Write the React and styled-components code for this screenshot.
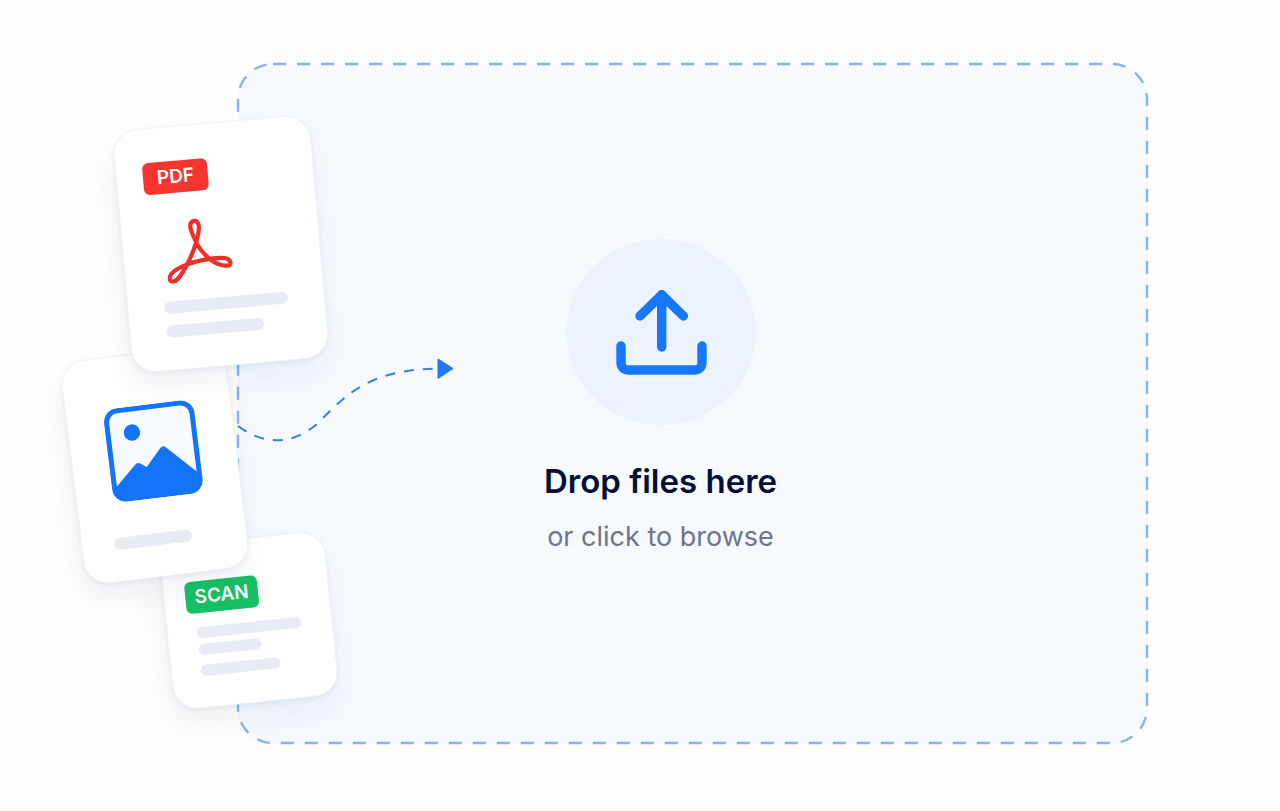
import React, { useRef } from 'react';
import styled, { createGlobalStyle } from 'styled-components';

const GlobalStyle = createGlobalStyle`
  * {
    box-sizing: border-box;
  }

  body {
    margin: 0;
    background: #fefefe;
    font-family: Inter, 'Liberation Sans', sans-serif;
  }
`

const Page = styled.main`
  position: relative;
  display: flex;
  min-height: 100vh;
  padding: 63px 132px 67px 237px;
  overflow: hidden;
`

const DropZone = styled.button`
  position: relative;
  flex: 1;
  display: flex;
  flex-direction: column;
  align-items: center;
  justify-content: center;
  padding: 0 64px 16px 0;
  border: none;
  border-radius: 36px;
  background: #f6faff;
  font-family: inherit;
  cursor: pointer;
`

const DashedOutline = styled.svg`
  position: absolute;
  inset: 0;
  width: 100%;
  height: 100%;
  overflow: visible;

  rect {
    width: calc(100% - 2px);
    height: calc(100% - 2px);
    fill: none;
    stroke: #8ab2f3;
    stroke-width: 2.4;
    stroke-dasharray: 13 11;
  }
`

const IconCircle = styled.span`
  display: flex;
  align-items: center;
  justify-content: center;
  width: 190px;
  height: 186px;
  border-radius: 50%;
  background: #edf3fe;
`

const Title = styled.span`
  margin-top: 36px;
  font-size: 33px;
  line-height: 40px;
  font-weight: 600;
  color: #050f3a;
`

const Hint = styled.span`
  margin-top: 20px;
  font-size: 27px;
  line-height: 32px;
  color: #6b7590;
`

const HiddenInput = styled.input`
  display: none;
`

const Connector = styled.svg`
  position: absolute;
  left: 230px;
  top: 350px;
`

const FileCard = styled.div`
  position: absolute;
  left: ${(props) => props.$left}px;
  top: ${(props) => props.$top}px;
  width: ${(props) => props.$width}px;
  height: ${(props) => props.$height}px;
  padding: ${(props) => props.$padding};
  display: flex;
  flex-direction: column;
  align-items: flex-start;
  border: 1px solid #f1f2fa;
  border-radius: 25px;
  background: #ffffff;
  box-shadow: -5px 16px 28px rgba(40, 50, 90, 0.06), 0 2px 4px rgba(60, 80, 150, 0.08);
  transform: rotate(${(props) => props.$tilt}deg);

  > * {
    flex-shrink: 0;
  }
`

const Badge = styled.span`
  width: ${(props) => props.$width}px;
  height: 32px;
  border-radius: 6px;
  background: ${(props) => props.$color};
  color: #ffffff;
  font-size: 19px;
  line-height: 32px;
  font-weight: 600;
  text-align: center;
`

const Lines = styled.div`
  display: flex;
  flex-direction: column;
  gap: ${(props) => props.$gap}px;
  margin: ${(props) => props.$margin};
`

const Line = styled.span`
  width: ${(props) => props.$width}px;
  height: ${(props) => (props.$thin ? 11 : 12)}px;
  border-radius: 6px;
  background: #e9ebf2;
`

const PictureMark = styled.svg`
  margin-left: 4px;
`

const AcrobatMark = styled.svg`
  margin: 27px 0 0 18px;
  transform: rotate(5deg);
`

function UploadIcon() {
  return (
    <svg width="92" height="86" viewBox="-1 0 92 86" fill="none" stroke="#1677ff" strokeWidth="9.4" strokeLinecap="round" strokeLinejoin="round">
      <path d="M5 57V73Q5 81 13 81H78Q86 81 86 73V57" />
      <path d="M45.7 6V58" />
      <path d="M24 27L45.7 5.8L67.4 27" />
    </svg>
  );
}

function PictureIcon() {
  return (
    <PictureMark width="92" height="94" viewBox="0 0 92 94">
      <rect x="3" y="2.5" width="86" height="89" rx="11.5" fill="#f6faff" stroke="#1473fb" strokeWidth="5" />
      <circle cx="27" cy="26" r="8.2" fill="#1473fb" />
      <path d="M2 81L26 58.500Q29 55.500 32 58L37.500 62L53.500 44.500Q56 42 58.500 44.500L90 76V81Q90 93 78 93H14Q2 93 2 81Z" fill="#1473fb" />
    </PictureMark>
  );
}

export default function App() {
  const fileInput = useRef(null);

  function handleBrowse() {
    fileInput.current.click();
  }

  return (
    <Page>
      <GlobalStyle />
      <DropZone type="button" onClick={handleBrowse}>
        <DashedOutline aria-hidden="true">
          <rect x="1" y="1" rx="35" />
        </DashedOutline>
        <IconCircle>
          <UploadIcon />
        </IconCircle>
        <Title>Drop files here</Title>
        <Hint>or click to browse</Hint>
      </DropZone>
      <HiddenInput ref={fileInput} type="file" multiple aria-label="Files" />

      <Connector width="230" height="100" viewBox="230 350 230 100" fill="none" aria-hidden="true">
        <path d="M238 426C262 444 291 447 318 423C345 396 368 369 440 368.5" stroke="#2f80ee" strokeWidth="2" strokeDasharray="10 9" />
        <path d="M438 359L453 368.5L438 378.5Z" fill="#1f7bf5" stroke="#1f7bf5" strokeLinejoin="round" />
      </Connector>

      <FileCard $left={166} $top={538} $width={166} $height={165} $tilt={-6} $padding="37px 21px 0">
        <Badge $width={73} $color="#17c065">SCAN</Badge>
        <Lines $gap={6} $margin="14px 0 0 8px">
          <Line $width={105} $thin />
          <Line $width={63} $thin />
        </Lines>
        <Lines $gap={6} $margin="10px 0 0 8px">
          <Line $width={80} $thin />
        </Lines>
      </FileCard>

      <FileCard $left={72} $top={352} $width={166} $height={225} $tilt={-7} $padding="51px 32px 0">
        <PictureIcon />
        <Lines $gap={12} $margin="35px 0 0">
          <Line $width={78} />
        </Lines>
      </FileCard>

      <FileCard $left={122} $top={122} $width={198} $height={244} $tilt={-5} $padding="34px 26px 0">
        <Badge $width={65} $color="#f5352f">PDF</Badge>
        <AcrobatMark width="66" height="66" viewBox="0 0 66 66" fill="none" stroke="#f02f27" strokeWidth="4.2" strokeLinejoin="round">
          <path d="M27 3C31.500 3 31.800 9 31 14C29.500 24 24 38 19.500 47C16 53 11 63 6 63.700C1 64 1.500 59 4 56C8 51 14 49 20 46.500C27 43.500 36 42 42 41C49 40 56 39 60 41C64 43.500 64 47.500 59.500 47.800C53 48 47 45 42 41C36 36 31 30 28 23C25 17 22.500 12 22.700 8C23 5 24 3 27 3Z" />
        </AcrobatMark>
        <Lines $gap={12} $margin="15px 0 0 10px">
          <Line $width={124} />
          <Line $width={98} />
        </Lines>
      </FileCard>
    </Page>
  );
}
